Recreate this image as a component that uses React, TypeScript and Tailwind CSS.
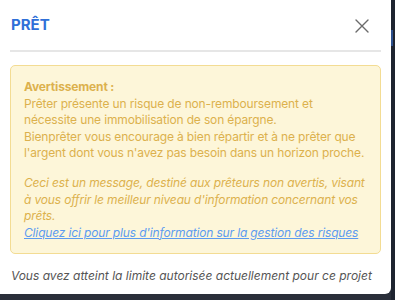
import React from "react";

export default function App() {
  return (
    <div className="relative w-[395px] h-[300px] overflow-hidden bg-[#2a2f3a]" style={{ fontFamily: '"Inter", "Open Sans", sans-serif' }}>
      <div className="absolute right-0 top-0 w-[4px] h-[300px] bg-[#1e2430]">
        <div className="mt-[30px] h-[16px] w-[2px] bg-[#2c4f8c]" />
      </div>
      <div className="w-[391px] h-[294px] bg-white rounded-br-[6px] flex flex-col">
        <div className="flex items-center justify-between pl-[11px] pr-[22px] h-[50px]">
          <span className="text-[15px] font-bold text-[#2f70d8] mt-[1px]">PRÊT</span>
          <svg width="14" height="14" viewBox="0 0 14 14" className="mt-[2px]">
            <path d="M1 1L13 13M13 1L1 13" stroke="#6b6b6b" strokeWidth="1.4" strokeLinecap="round" />
          </svg>
        </div>
        <div className="mx-[10px] h-[2px] bg-[#e6e6e6]" />
        <div className="mx-[10px] mt-[13px] rounded-[5px] border border-[#f3dc93] bg-[#fdf6d9] pl-[13px] pr-[10px] pt-[13px] pb-[12px] text-[12px] tracking-[-0.15px] text-[#dcb14d]">
          <div className="font-bold leading-[16.6px]">Avertissement :</div>
          <div className="whitespace-nowrap leading-[16.6px]">
            Prêter présente un risque de non-remboursement et<br />
            nécessite une immobilisation de son épargne.<br />
            Bienprêter vous encourage à bien répartir et à ne prêter que<br />
            l'argent dont vous n'avez pas besoin dans un horizon proche.
          </div>
          <div className="mt-[13px] italic whitespace-nowrap leading-[16.6px]">
            Ceci est un message, destiné aux prêteurs non avertis, visant<br />
            à vous offrir le meilleur niveau d'information concernant vos<br />
            prêts.
          </div>
          <div className="leading-[16.6px]">
            <a href="#" className="italic underline text-[#5c9bf0] whitespace-nowrap">Cliquez ici pour plus d'information sur la gestion des risques</a>
          </div>
        </div>
        <div className="pl-[11px] mt-[14px] text-[12px] leading-[16px] italic text-[#555555] whitespace-nowrap">
          Vous avez atteint la limite autorisée actuellement pour ce projet
        </div>
      </div>
    </div>
  );
}
